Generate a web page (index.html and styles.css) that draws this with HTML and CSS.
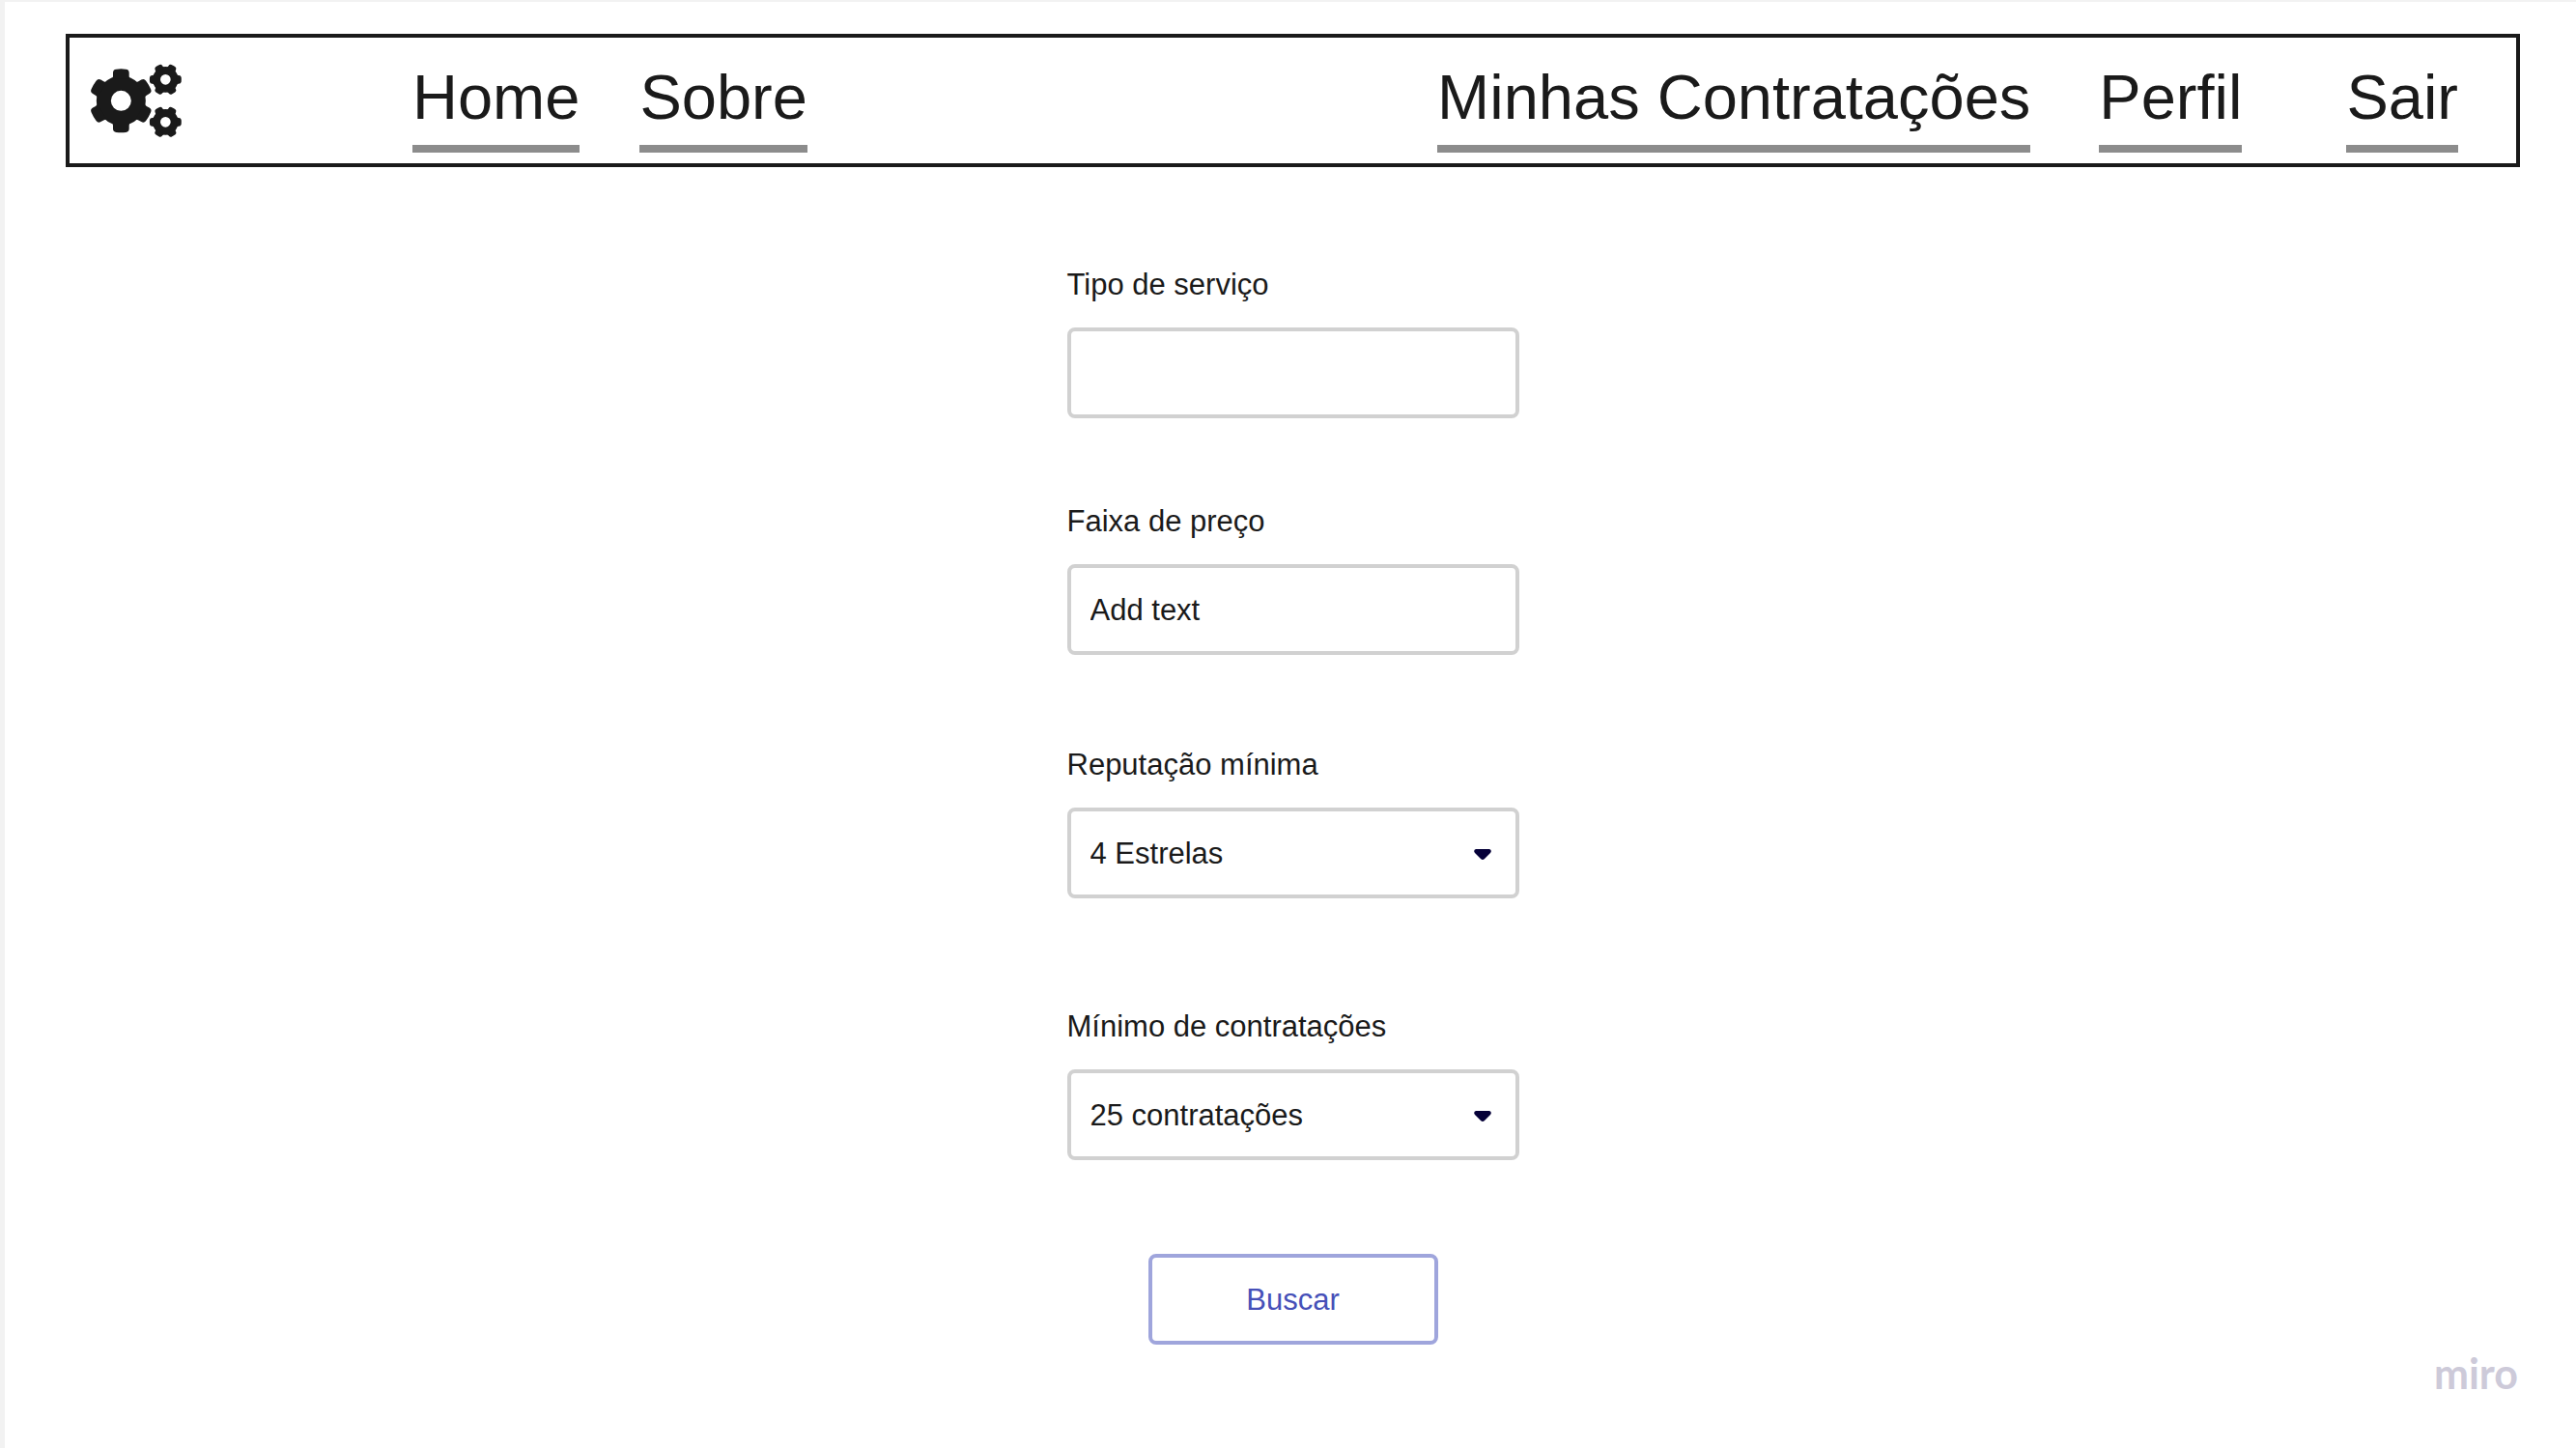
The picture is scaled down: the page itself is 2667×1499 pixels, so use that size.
FILE: index.html
```html
<!DOCTYPE html>
<html lang="pt-BR">
<head>
  <meta charset="utf-8">
  <meta name="viewport" content="width=device-width, initial-scale=1">
  <title>Buscar serviços</title>
  <link rel="stylesheet" href="styles.css">
</head>
<body>
  <header class="topbar">
    <svg class="logo" viewBox="0 0 288 228" role="img" aria-label="Engrenagens">
      <defs>
        <path id="tooth" d="M-28-68Q-25-72-25-77V-87Q-25-97-15-98Q0-100 15-98Q25-97 25-87V-77Q25-72 28-68Z"/>
        <path id="cog" d="M-15-34Q-13-37-13-41Q-13-48-7-49Q0-50 7-49Q13-48 13-41Q13-37 15-34Z"/>
        <g id="small-gear">
          <circle r="28" fill="none" stroke="currentColor" stroke-width="24"/>
          <use href="#cog" transform="rotate(30)"/>
          <use href="#cog" transform="rotate(90)"/>
          <use href="#cog" transform="rotate(150)"/>
          <use href="#cog" transform="rotate(210)"/>
          <use href="#cog" transform="rotate(270)"/>
          <use href="#cog" transform="rotate(330)"/>
        </g>
      </defs>
      <g fill="currentColor">
        <g transform="translate(97 115)">
          <circle r="54" fill="none" stroke="currentColor" stroke-width="45"/>
          <use href="#tooth"/>
          <use href="#tooth" transform="rotate(60)"/>
          <use href="#tooth" transform="rotate(120)"/>
          <use href="#tooth" transform="rotate(180)"/>
          <use href="#tooth" transform="rotate(240)"/>
          <use href="#tooth" transform="rotate(300)"/>
        </g>
        <use href="#small-gear" transform="translate(235 49)"/>
        <use href="#small-gear" transform="translate(235 181)"/>
      </g>
    </svg>
    <nav class="nav" aria-label="Principal">
      <a class="nav-link" href="#home">Home</a>
      <a class="nav-link" href="#sobre">Sobre</a>
    </nav>
    <nav class="nav nav-account" aria-label="Conta">
      <a class="nav-link" href="#contratacoes">Minhas Contratações</a>
      <a class="nav-link" href="#perfil">Perfil</a>
      <a class="nav-link nav-exit" href="#sair">Sair</a>
    </nav>
  </header>

  <main class="content">
    <form class="search">
      <div class="field field-service">
        <label for="tipo">Tipo de serviço</label>
        <input class="control" id="tipo" type="text">
      </div>
      <div class="field field-price">
        <label for="preco">Faixa de preço</label>
        <input class="control" id="preco" type="text" value="Add text">
      </div>
      <div class="field field-rating">
        <label for="reputacao">Reputação mínima</label>
        <div class="select">
          <select class="control" id="reputacao"><option>4 Estrelas</option></select>
          <svg class="caret" viewBox="0 0 18 11" aria-hidden="true"><path d="M2 0H16Q19 1 17 4L11 10Q9 12 7 10L1 4Q-1 1 2 0Z"/></svg>
        </div>
      </div>
      <div class="field field-hires">
        <label for="minimo">Mínimo de contratações</label>
        <div class="select">
          <select class="control" id="minimo"><option>25 contratações</option></select>
          <svg class="caret" viewBox="0 0 18 11" aria-hidden="true"><path d="M2 0H16Q19 1 17 4L11 10Q9 12 7 10L1 4Q-1 1 2 0Z"/></svg>
        </div>
      </div>
      <button class="submit" type="button">Buscar</button>
    </form>
  </main>

  <footer class="footer">miro</footer>
</body>
</html>
```
FILE: styles.css
```css
* {
  box-sizing: border-box;
}

body {
  display: flex;
  flex-direction: column;
  min-height: 100vh;
  margin: 0;
  border-top: 2px solid #f2f2f2;
  border-left: 5px solid #f2f2f2;
  background: #fff;
  color: #1a1a1a;
  font-family: "Liberation Sans", Arial, sans-serif;
  font-size: 31px;
  line-height: 36px;
}

.topbar {
  display: flex;
  align-items: center;
  margin: 33px 58px 0 63px;
  padding: 0 60px 0 21px;
  border: 4px solid #1a1a1a;
}

.logo {
  flex: none;
  width: 96px;
  height: 76px;
  margin-right: 238px;
}

.nav {
  display: flex;
  gap: 62px;
  padding: 23px 0 11px;
}

.nav-account {
  gap: 71px;
  margin-left: auto;
}

.nav-link {
  padding-bottom: 10px;
  border-bottom: 8px solid #8c8c8c;
  color: inherit;
  font-size: 65px;
  line-height: 78px;
  text-decoration: none;
  white-space: nowrap;
}

.nav-exit {
  margin-left: 37px;
}

.content {
  display: flex;
  justify-content: center;
  margin: 104px 58px 0 63px;
}

.search {
  display: flex;
  flex-direction: column;
  width: 468px;
}

.field {
  display: flex;
  flex-direction: column;
  gap: 26px;
}

.field-service {
  margin-bottom: 89px;
}

.field-price {
  margin-bottom: 96px;
}

.field-rating {
  margin-bottom: 115px;
}

.field-hires {
  margin-bottom: 97px;
}

.control,
.submit {
  height: 94px;
  padding: 2px 20px 0;
  border: 4px solid #d1d1d1;
  border-radius: 8px;
  background: #fff;
  color: inherit;
  font: inherit;
}

.control {
  width: 100%;
  appearance: none;
}

.select {
  position: relative;
  display: flex;
}

.caret {
  position: absolute;
  top: 43px;
  right: 29px;
  width: 18px;
  height: 11px;
  fill: #050038;
  pointer-events: none;
}

.submit {
  align-self: center;
  width: 300px;
  border-color: #9fa5dc;
  color: #4650b8;
}

.footer {
  margin-top: auto;
  padding: 0 60px 53px;
  color: #cdcad9;
  font-family: Lato, sans-serif;
  font-size: 43px;
  font-weight: 700;
  line-height: 48px;
  text-align: right;
}
```
